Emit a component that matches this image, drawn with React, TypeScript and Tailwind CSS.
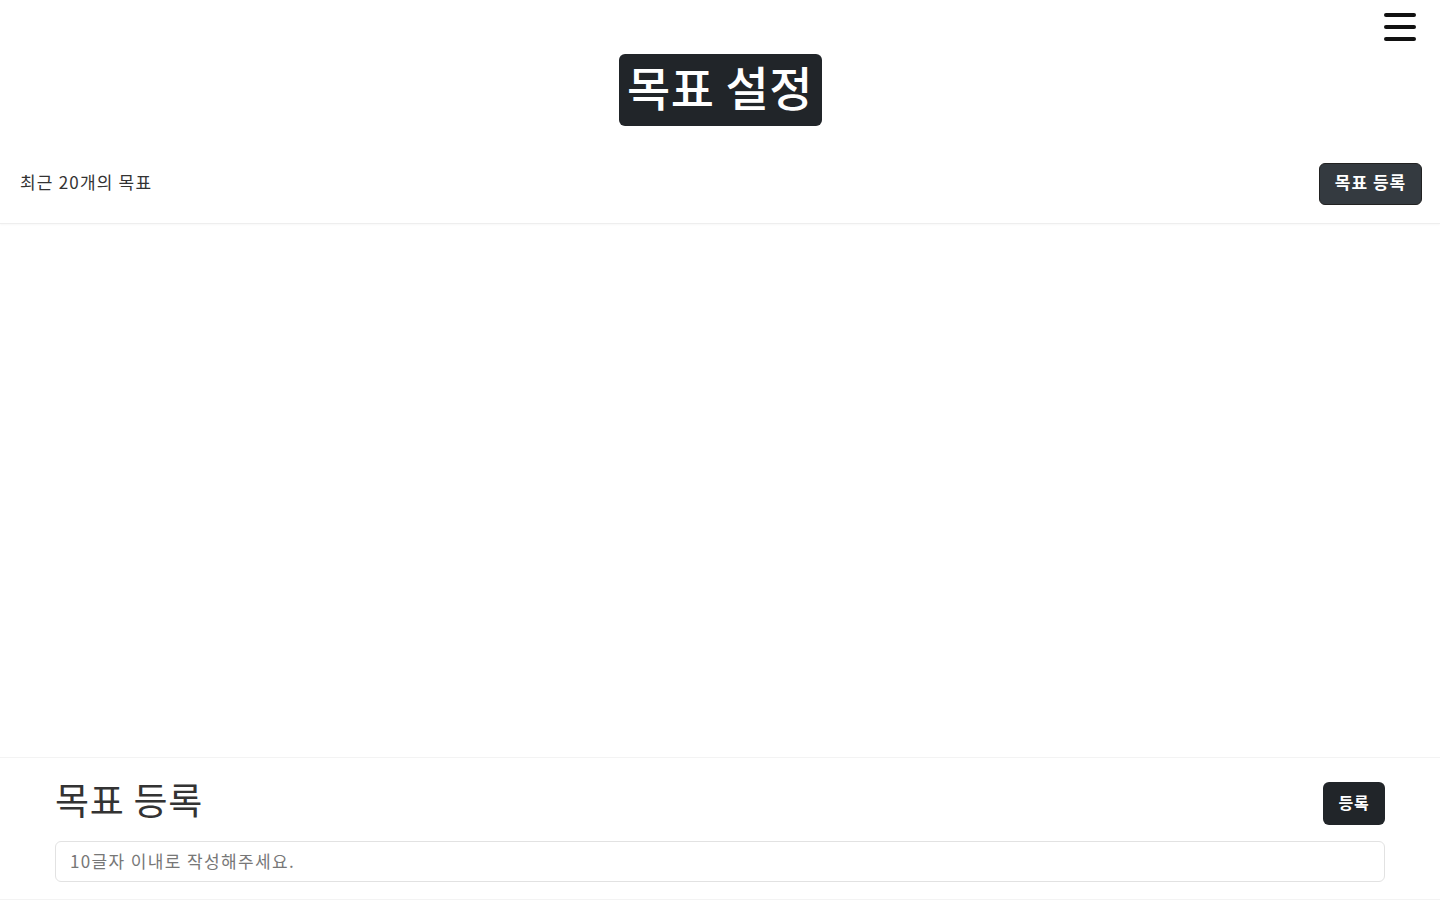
const FONT = 'font-["Noto_Sans_CJK_KR","Noto_Sans",sans-serif]'

function Hamburger() {
  return (
    <button className="flex flex-col gap-[8px] w-[32px] mt-[13px]">
      <span className="block h-[4px] w-full bg-[#111] rounded-sm" />
      <span className="block h-[4px] w-full bg-[#111] rounded-sm" />
      <span className="block h-[4px] w-full bg-[#111] rounded-sm" />
    </button>
  )
}

export default function App() {
  return (
    <div className={`h-[900px] w-full bg-white flex flex-col text-[#212529] ${FONT}`}>
      {/* header */}
      <header className="flex flex-col">
        <div className="flex justify-end pr-[24px] h-[54px]">
          <Hamburger />
        </div>
        <div className="flex justify-center">
          <h1 className="bg-[#212529] text-white text-[47px] leading-none font-medium tracking-[0.01em] rounded-md w-[203px] h-[72px] pb-[10px] flex items-center justify-center">
            목표 설정
          </h1>
        </div>
      </header>

      {/* list header */}
      <div className="flex items-center justify-between pl-[20px] pr-[18px] pt-[37px] pb-[18px] border-b border-[#eeeeee] shadow-[0_1px_2px_rgba(0,0,0,0.03)]">
        <span className="text-[17px] tracking-[0.07em] text-[#333] -mt-[4px]">최근 20개의 목표</span>
        <button className="bg-[#343a40] text-white text-[17px] font-bold tracking-[0.06em] rounded-md w-[103px] h-[42px] border border-[#222] pb-[4px]">
          목표 등록
        </button>
      </div>

      {/* list body */}
      <div className="flex-1" />

      {/* register form */}
      <section className="border-t border-[#f3f3f3] border-b px-[55px] pt-[23px] pb-[17px]">
        <div className="flex items-center justify-between">
          <h2 className="text-[37px] leading-none tracking-[0.02em] text-[#333] pb-[8px]">목표 등록</h2>
          <button className="bg-[#212529] text-white text-[16px] font-bold tracking-[0.05em] rounded-md w-[62px] h-[43px] pb-[4px]">
            등록
          </button>
        </div>
        <input
          className="mt-[15px] w-full h-[41px] border border-[#e2e2e2] rounded-md px-[14px] pb-[3px] text-[17px] tracking-[0.08em] placeholder:text-[#777] outline-none"
          placeholder="10글자 이내로 작성해주세요."
        />
      </section>
    </div>
  )
}
